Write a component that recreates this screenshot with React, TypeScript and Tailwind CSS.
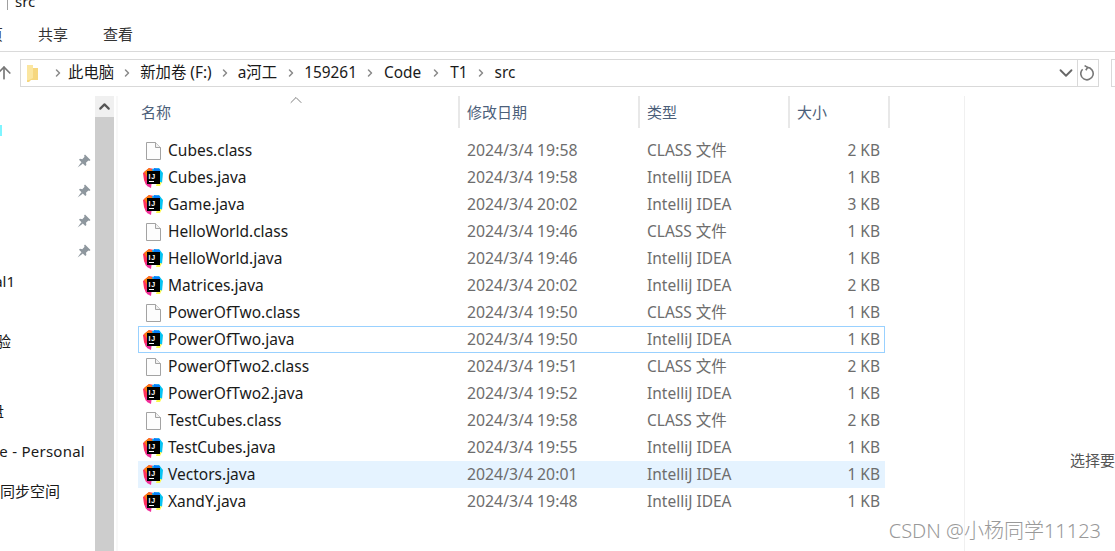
import { ChevronRight, ChevronDown, ChevronUp, ArrowUp } from 'lucide-react'

const FONT = "font-['Noto_Sans','Noto_Sans_CJK_SC',sans-serif]"

type FileRow = { name: string; date: string; kind: 'class' | 'java'; size: string; state?: 'focus' | 'hover' }

const FILES: FileRow[] = [
  { name: 'Cubes.class', date: '2024/3/4 19:58', kind: 'class', size: '2 KB' },
  { name: 'Cubes.java', date: '2024/3/4 19:58', kind: 'java', size: '1 KB' },
  { name: 'Game.java', date: '2024/3/4 20:02', kind: 'java', size: '3 KB' },
  { name: 'HelloWorld.class', date: '2024/3/4 19:46', kind: 'class', size: '1 KB' },
  { name: 'HelloWorld.java', date: '2024/3/4 19:46', kind: 'java', size: '1 KB' },
  { name: 'Matrices.java', date: '2024/3/4 20:02', kind: 'java', size: '2 KB' },
  { name: 'PowerOfTwo.class', date: '2024/3/4 19:50', kind: 'class', size: '1 KB' },
  { name: 'PowerOfTwo.java', date: '2024/3/4 19:50', kind: 'java', size: '1 KB', state: 'focus' },
  { name: 'PowerOfTwo2.class', date: '2024/3/4 19:51', kind: 'class', size: '2 KB' },
  { name: 'PowerOfTwo2.java', date: '2024/3/4 19:52', kind: 'java', size: '1 KB' },
  { name: 'TestCubes.class', date: '2024/3/4 19:58', kind: 'class', size: '2 KB' },
  { name: 'TestCubes.java', date: '2024/3/4 19:55', kind: 'java', size: '1 KB' },
  { name: 'Vectors.java', date: '2024/3/4 20:01', kind: 'java', size: '1 KB', state: 'hover' },
  { name: 'XandY.java', date: '2024/3/4 19:48', kind: 'java', size: '1 KB' },
]

function FileIcon() {
  return (
    <svg width="15" height="18" viewBox="0 0 15 18" className="shrink-0 ml-[3px]">
      <path d="M.5 .5H9.5L14.5 5.5V17.5H.5Z" fill="#fdfdfd" stroke="#a3a3a3" />
      <path d="M9.5 .5V5.5H14.5" fill="#f0f0f0" stroke="#a3a3a3" />
    </svg>
  )
}

function IdeaIcon() {
  return (
    <svg width="20" height="20" viewBox="0 0 20 20" className="shrink-0">
      <path d="M0 5L6 0L11 1L10 13L3 17L1 12Z" fill="#fe315d" />
      <path d="M1 4L6 0L10 3L4 9Z" fill="#f97a12" />
      <path d="M9 1L16 0L20 5L19 15L12 12Z" fill="#07c3f2" />
      <path d="M11 0L17 1L16 8L10 6Z" fill="#087cfa" />
      <path d="M2 13L9 12L8 20L4 18Z" fill="#f02d9a" />
      <path d="M14 15L19 14L17 18L13 18Z" fill="#fcf84a" />
      <rect x="4" y="3" width="13" height="13" fill="#000" />
      <text x="5.6" y="10.5" fontSize="7" letterSpacing=".6" fontWeight="700" fill="#fff" fontFamily="'Liberation Sans', sans-serif">IJ</text>
      <rect x="6" y="13" width="5" height="1" fill="#fff" />
    </svg>
  )
}

function PinIcon() {
  return (
    <svg width="14" height="14" viewBox="0 0 14 14" className="shrink-0">
      <path d="M8 .5L13.5 6L12.3 7L11.4 6.4L9 8.8L9.4 11L8.3 12L2 5.7L3 4.8L5.3 5.2L7.6 2.7L7 1.7Z" fill="#8e979e" />
      <path d="M4.5 8L0.6 13.4L6 9.5Z" fill="#8e979e" />
    </svg>
  )
}

function RefreshIcon() {
  return (
    <svg width="16" height="16" viewBox="0 0 16 16" fill="none" stroke="#777" strokeWidth="1.6">
      <path d="M2.6 4.2A6.2 6.2 0 1 0 7.2 2.4" />
      <path d="M4.6 .6L7.6 2.4L5.8 5.2" />
    </svg>
  )
}

// 导航窗格被截掉左边，只留下每行文字的尾巴
function NavRow({ text, width, h = 'h-[30px]', pin, extra = '' }: { text?: string; width?: string; h?: string; pin?: boolean; extra?: string }) {
  return (
    <div className={`${h} flex items-center justify-between pr-[4px] shrink-0`}>
      <div className={`${width ?? 'w-0'} overflow-hidden flex justify-end whitespace-nowrap text-[15px] text-[#1a1a1a] ${extra}`}>
        {text}
      </div>
      {pin && <PinIcon />}
    </div>
  )
}

function Crumb({ text, gap = 'w-[26px]' }: { text: string; gap?: string }) {
  return (
    <div className="flex items-center">
      <span className="text-[15.4px] text-[#1a1a1a] whitespace-nowrap">{text}</span>
      <div className={`${gap} flex justify-center`}>
        <ChevronRight size={12} strokeWidth={3} className="text-[#8a8a8a]" />
      </div>
    </div>
  )
}

function HeaderCell({ text, className }: { text: string; className: string }) {
  return (
    <div className={`${className} h-full flex items-center pl-[7px] border-r-2 border-[#e8e8e8] text-[15px] text-[#4c607a] shrink-0`}>
      {text}
    </div>
  )
}

function Row({ file }: { file: FileRow }) {
  const stateClass =
    file.state === 'focus'
      ? 'border border-[#99d1ff]'
      : file.state === 'hover'
        ? 'border border-[#e5f3ff] bg-[#e5f3ff]'
        : 'border border-transparent'
  return (
    <div className={`h-[27px] w-[747px] flex items-center text-[15.5px] ${stateClass}`}>
      <div className="w-[328px] flex items-center shrink-0">
        <div className="w-[29px] flex justify-start shrink-0 pl-[4px]">
          {file.kind === 'java' ? <IdeaIcon /> : <FileIcon />}
        </div>
        <span className="text-[#1a1a1a] whitespace-nowrap">{file.name}</span>
      </div>
      <div className="w-[180px] text-[15.8px] text-[#6d6d6d] whitespace-nowrap shrink-0">{file.date}</div>
      <div className="w-[150px] text-[#6d6d6d] whitespace-nowrap shrink-0">{file.kind === 'class' ? 'CLASS 文件' : 'IntelliJ IDEA'}</div>
      <div className="w-[83px] text-right text-[#6d6d6d] whitespace-nowrap shrink-0">{file.size}</div>
    </div>
  )
}

export default function App() {
  return (
    <div className={`relative w-[1115px] h-[551px] bg-white overflow-hidden flex flex-col ${FONT}`}>
      {/* 标题栏 */}
      <div className="h-[10px] shrink-0 flex items-end overflow-hidden">
        <div className="w-px h-[10px] bg-[#a0a0a0] ml-[7px]" />
        <span className="ml-[7px] text-[15px] leading-[20px] text-[#1a1a1a] mb-[-1px]">src</span>
      </div>

      {/* 功能区 */}
      <div className="h-[42px] shrink-0 flex items-center pt-[8px] border-b border-[#dadada] text-[15px] text-[#333]">
        <div className="w-[3px] overflow-hidden flex justify-end whitespace-nowrap">页</div>
        <span className="ml-[35px]">共享</span>
        <span className="ml-[35px]">查看</span>
      </div>

      {/* 地址栏 */}
      <div className="h-[44px] shrink-0 flex items-start pt-[7px]">
        <ArrowUp size={20} strokeWidth={2} className="text-[#777] ml-[-6px] mt-[4px] shrink-0" />
        <div className="ml-[6px] h-[28px] w-[1079px] shrink-0 border border-[#d9d9d9] flex items-center">
          <div className="w-[47px] flex items-center shrink-0 pl-[5px]">
            <svg width="13" height="17" viewBox="0 0 13 17" className="shrink-0">
              <path d="M1 0H6L7 3H12V15H5L3 17H1Z" fill="#f6d77f" />
              <path d="M1 0H7V13L3 15H1Z" fill="#fbe6a0" />
            </svg>
            <ChevronRight size={12} strokeWidth={3} className="text-[#8a8a8a] ml-[13px] shrink-0" />
          </div>
          <Crumb text="此电脑" />
          <Crumb text="新加卷 (F:)" />
          <Crumb text="a河工" gap="w-[27px]" />
          <Crumb text="159261" gap="w-[27px]" />
          <Crumb text="Code" gap="w-[29px]" />
          <Crumb text="T1" gap="w-[27px]" />
          <span className="text-[15.4px] text-[#1a1a1a]">src</span>
          <div className="ml-auto h-full flex items-center">
            <ChevronDown size={22} strokeWidth={2} className="text-[#666]" />
            <div className="h-full w-[21px] border-l border-[#d9d9d9] flex items-center justify-center">
              <RefreshIcon />
            </div>
          </div>
        </div>
        <div className="ml-[12px] h-[28px] flex-1 border border-r-0 border-[#d9d9d9]" />
      </div>

      {/* 主体 */}
      <div className="flex-1 min-h-0 flex">
        {/* 导航窗格 */}
        <div className="relative w-[95px] shrink-0 flex flex-col pt-[20px]">
          <div className="absolute left-0 top-[29px] w-[2px] h-[11px] bg-[#7ff5ff]" />
          <NavRow />
          <NavRow pin />
          <NavRow pin />
          <NavRow pin />
          <NavRow pin />
          <NavRow text="al1" width="w-[15px]" />
          <NavRow />
          <NavRow text="验" width="w-[11px]" />
          <NavRow h="h-[40px]" />
          <NavRow text="盘" width="w-[4px]" />
          <NavRow h="h-[50px]" text="e - Personal" width="w-[85px]" extra="tracking-[0.25px]" />
          <NavRow h="h-[30px]" text="同步空间" width="w-[60px]" />
        </div>

        {/* 滚动条 */}
        <div className="w-[19px] shrink-0 bg-[#f0f0f0] flex flex-col">
          <div className="h-[21px] flex items-center justify-center">
            <ChevronUp size={17} strokeWidth={3} className="text-[#555]" />
          </div>
          <div className="flex-1 bg-[#cdcdcd]" />
        </div>

        {/* 文件列表 */}
        <div className="flex-1 min-w-0 relative ml-[2px] border-l-2 border-[#f8f8f8]">
          <div className="h-[32px] ml-[16px] flex items-center">
            <HeaderCell text="名称" className="w-[326px]" />
            <HeaderCell text="修改日期" className="w-[180px]" />
            <HeaderCell text="类型" className="w-[150px]" />
            <HeaderCell text="大小" className="w-[100px]" />
          </div>
          <ChevronUp size={20} strokeWidth={1} className="absolute left-[168px] top-[-6px] text-[#666]" />
          <div className="mt-[9px] ml-[20px]">
            {FILES.map(file => (
              <Row key={file.name} file={file} />
            ))}
          </div>
        </div>

        {/* 预览窗格 */}
        <div className="w-[151px] shrink-0 border-l border-[#f0f0f0] pt-[353px] pl-[105px] text-[15px] text-[#555] whitespace-nowrap overflow-hidden">
          选择要
        </div>
      </div>

      {/* 水印 */}
      <div className="absolute right-[14px] bottom-[5px] text-[20px] font-light text-[#999] whitespace-nowrap">
        CSDN @小杨同学11123
      </div>
    </div>
  )
}
